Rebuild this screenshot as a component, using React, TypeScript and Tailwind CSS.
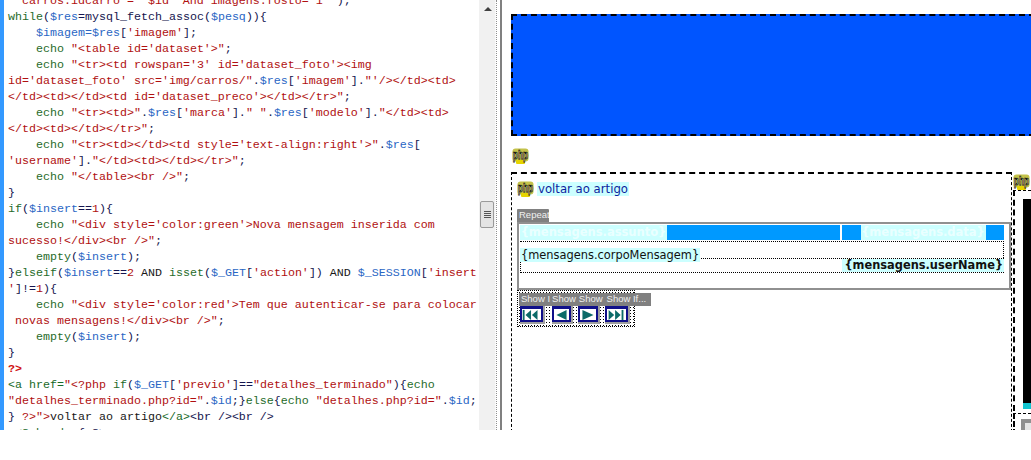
const K = "text-[#1f6b2a]", B = "text-[#2a66c4]", R = "text-[#b01010]", N = "text-[#14144e]", D = "text-[#181818]", G = "text-[#176a28]";
type Seg = [string, string];
const code: { i?: boolean; s: Seg[] }[] = [
  { s: [[R, "  carros.idcarro = '$id' And imagens.fosto='1'\""], [N, ");"]] },
  { s: [[K, "while"], [N, "("], [B, "$res"], [N, "="], [N, "mysql_fetch_assoc"], [N, "("], [B, "$pesq"], [N, ")){"]] },
  { i: true, s: [[B, "$imagem=$res"], [N, "["], [R, "'imagem'"], [N, "];"]] },
  { i: true, s: [[K, "echo "], [R, "\"<table id='dataset'>\""], [N, ";"]] },
  { i: true, s: [[K, "echo "], [R, "\"<tr><td rowspan='3' id='dataset_foto'><img"]] },
  { s: [[R, "id='dataset_foto' src='img/carros/\""], [N, "."], [B, "$res"], [N, "["], [R, "'imagem'"], [N, "]."], [R, "\"'/></td><td>"]] },
  { s: [[R, "</td><td></td><td id='dataset_preco'></td></tr>\""], [N, ";"]] },
  { i: true, s: [[K, "echo "], [R, "\"<tr><td>\""], [N, "."], [B, "$res"], [N, "["], [R, "'marca'"], [N, "]."], [R, "\" \""], [N, "."], [B, "$res"], [N, "["], [R, "'modelo'"], [N, "]."], [R, "\"</td><td>"]] },
  { s: [[R, "</td><td></td></tr>\""], [N, ";"]] },
  { i: true, s: [[K, "echo "], [R, "\"<tr><td></td><td style='text-align:right'>\""], [N, "."], [B, "$res"], [N, "["]] },
  { s: [[R, "'username'"], [N, "]."], [R, "\"</td><td></td></tr>\""], [N, ";"]] },
  { i: true, s: [[K, "echo "], [R, "\"</table><br />\""], [N, ";"]] },
  { s: [[N, "}"]] },
  { s: [[K, "if"], [N, "("], [B, "$insert"], [N, "=="], [R, "1"], [N, "){"]] },
  { i: true, s: [[K, "echo "], [R, "\"<div style='color:green'>Nova mensagem inserida com"]] },
  { s: [[R, "sucesso!</div><br />\""], [N, ";"]] },
  { i: true, s: [[K, "empty"], [N, "("], [B, "$insert"], [N, ");"]] },
  { s: [[N, "}"], [K, "elseif"], [N, "("], [B, "$insert"], [N, "=="], [R, "2"], [D, " AND "], [K, "isset"], [N, "("], [B, "$_GET"], [N, "["], [R, "'action'"], [N, "])"], [D, " AND "], [B, "$_SESSION"], [N, "["], [R, "'insert"]] },
  { s: [[R, "'"], [N, "]!="], [R, "1"], [N, "){"]] },
  { i: true, s: [[K, "echo "], [R, "\"<div style='color:red'>Tem que autenticar-se para colocar"]] },
  { s: [[R, " novas mensagens!</div><br />\""], [N, ";"]] },
  { i: true, s: [[K, "empty"], [N, "("], [B, "$insert"], [N, ");"]] },
  { s: [[N, "}"]] },
  { s: [["text-[#d01010] font-bold", "?>"]] },
  { s: [[G, "<a href="], [R, "\"<?php"], [K, " if"], [N, "("], [B, "$_GET"], [N, "["], [R, "'previo'"], [N, "]=="], [R, "\"detalhes_terminado\""], [N, "){"], [K, "echo"]] },
  { s: [[R, "\"detalhes_terminado.php?id=\""], [N, "."], [B, "$id"], [N, ";}"], [K, "else"], [N, "{"], [K, "echo "], [R, "\"detalhes.php?id=\""], [N, "."], [B, "$id"], [N, ";"]] },
  { s: [[N, "} "], [R, "?>"], [R, "\">"], [D, "voltar ao artigo"], [G, "</a>"], [N, "<br /><br />"]] },
  { s: [[G, " <?php "], [K, "do"], [N, " { ?>"]] },
];

function Php() {
  return (
    <svg width="17" height="16" viewBox="0 0 17 16" className="block shrink-0">
      <rect x="0.5" y="0.5" width="16" height="13" rx="3" fill="#c4c24a" />
      <rect x="4" y="12" width="9" height="4" rx="1" fill="#e6d400" />
      <text x="8.5" y="11" textAnchor="middle" fontFamily="Liberation Sans, sans-serif" fontWeight="700" fontSize="12" fill="#fbf8b8" stroke="#000" strokeWidth="0.75" textLength="15.5" lengthAdjust="spacingAndGlyphs">php</text>
    </svg>
  );
}

function Nav({ kind, w, className = "" }: { kind: "first" | "prev" | "next" | "last"; w: number; className?: string }) {
  const iw = w - 6;
  const paths = {
    first: <><rect x="0" y="1" width="2" height="11" /><path d="M9 1v11L3 6.5zM16 1v11L10 6.5z" /></>,
    prev: <path d="M13 1v11L2 6.5z" />,
    next: <path d="M2 1v11l12-5.5z" />,
    last: <><path d="M1 1v11l6-5.5zM8 1v11l6-5.5z" /><rect x="15" y="1" width="2" height="11" /></>,
  } as const;
  return (
    <div className={"h-[18px] shrink-0 bg-white border-r-2 border-b-2 border-[#a0a0a0] " + className} style={{ width: w }}>
      <div className="h-[16px] border-t-[3px] border-x-2 border-b-2 border-[#10108a] bg-white flex justify-center">
        <svg width={iw} height="12" viewBox={`0 0 ${iw} 13`} className="block" fill="#0b6b68">
          {paths[kind]}
        </svg>
      </div>
    </div>
  );
}

const tag = "bg-[#808080] text-[#f0f0f0] text-[9.5px] leading-[12px] h-[13px] overflow-hidden whitespace-nowrap font-['Liberation_Sans',sans-serif]";
const sans = "font-['DejaVu_Sans',sans-serif]";

export default function App() {
  return (
    <div className="w-[1031px] h-[460px] bg-white overflow-hidden">
      <div className="flex h-[430px] overflow-hidden">
        <div className="w-[4px] shrink-0 bg-[#3399ff]" />
        <div className="w-[475px] shrink-0 pl-[4px] -mt-[7px] font-['Liberation_Mono',monospace] text-[11.67px] leading-[16px] whitespace-pre overflow-hidden">
          {code.map((l, n) => (
            <div key={n} className="h-[16px]">
              {l.i ? "    " : ""}
              {l.s.map(([c, t], j) => <span key={j} className={c}>{t}</span>)}
            </div>
          ))}
        </div>
        <div className="w-[17px] shrink-0 bg-[#f1f1f1] pl-[1px] border-r border-[#fafafa]">
          <div className="ml-[4px] mt-[7px] w-0 h-0 border-x-[4px] border-x-transparent border-b-[4px] border-b-[#404040]" />
          <div className="mt-[190px] w-[14px] h-[27px] bg-[#e4e4e4] border border-[#9a9a9a] rounded-[2px] flex flex-col items-center justify-center gap-[1px]">
            <div className="w-[7px] h-[1px] bg-[#555]" />
            <div className="w-[7px] h-[1px] bg-[#555]" />
            <div className="w-[7px] h-[1px] bg-[#555]" />
            <div className="w-[7px] h-[1px] bg-[#555]" />
          </div>
        </div>
        <div className="w-[4px] shrink-0 bg-white border-l border-dotted border-[#909090]" />
        <div className="w-[2px] shrink-0 bg-[#808080]" />

        <div className={"flex-1 min-w-0 pl-[9px] pt-[14px] overflow-hidden " + sans}>
          <div className="h-[122px] -mr-[4px] bg-[#0055ff] border-2 border-dashed border-black" />
          <div className="h-[36px] pt-[12px] pl-[1px]"><Php /></div>
          <div className="flex">
            <div className="w-[501px] shrink-0 h-[260px] border-t-2 border-x border-dashed border-black pl-[5px] pt-[7px]">
              <div className="flex items-center h-[15px]">
                <Php />
                <span className="ml-[3px] bg-[#ccffff] px-[1px] text-[11.7px] leading-[14px] text-[#0d1f9e]">voltar ao artigo</span>
              </div>
              <div className="mt-[13px] flex flex-col">
                <div className={tag + " w-[32px] pl-[2px] rounded-t-[1px]"}>Repeat</div>
                <div className="w-[494px] h-[68px] border-2 border-[#909090] pl-[1px] pt-[1px] pr-[5px]">
                  <div className="flex gap-[2px] h-[15px]">
                    <div className="flex-1 bg-[#0099ff] flex">
                      <div className="w-[147px] h-full bg-[#ccffff] text-[#eaffff] text-[11.5px] leading-[14px] font-bold text-center whitespace-nowrap overflow-hidden">{"{mensagens.assunto}"}</div>
                    </div>
                    <div className="w-[162px] bg-[#0099ff] flex justify-center">
                      <div className="w-[125px] h-full bg-[#ccffff] text-[#eaffff] text-[11.5px] leading-[14px] font-bold text-center whitespace-nowrap overflow-hidden">{"{mensagens.data}"}</div>
                    </div>
                  </div>
                  <div className="h-[17px] mt-[1px] border-t border-r border-dotted border-black">
                    <span className="bg-[#ccffff] inline-block px-[1px] text-[11.4px] leading-[14px] text-[#111]">{"{mensagens.corpoMensagem}"}</span>
                  </div>
                  <div className="flex h-[15px] border-y border-l border-dotted border-black">
                    <div className="flex-1" />
                    <div className="w-[162px] bg-[#ccffff] text-right pr-[1px] text-[11.4px] leading-[13px] font-bold text-[#111] whitespace-nowrap overflow-hidden">{"{mensagens.userName}"}</div>
                  </div>
                </div>
              </div>
              <div className="w-[118px] h-[37px] border border-dotted border-black pt-[2px] bg-[radial-gradient(#000_0.6px,transparent_0.7px)] bg-[length:3px_3px]">
                <div className={tag + " ml-[1px] w-[132px] flex pl-[2px]"}>
                  <span>Show I</span><span className="ml-[2px]">Show</span><span className="ml-[3px]">Show</span><span className="ml-[4px]">Show If...</span>
                </div>
                <div className="flex pl-[2px]">
                  <Nav kind="first" w={25} />
                  <Nav kind="prev" w={21} className="ml-[7px]" />
                  <Nav kind="next" w={22} className="ml-[5px]" />
                  <Nav kind="last" w={25} className="ml-[5px]" />
                </div>
              </div>
            </div>
            <div className="flex-1 min-w-0 -mt-[1px] pt-[3px] pl-[1px]">
              <Php />
              <div className="h-[221px] border-l-2 border-t border-dashed border-black pl-[8px] pt-[8px]">
                <div className="w-[12px] h-[204px] bg-black" />
                <div className="w-[12px] h-[6px] bg-[#11c5d0]" />
              </div>
              <div className="mt-[2px] h-[30px] border-l-2 border-t border-dashed border-black pl-[6px] pt-[5px]">
                <div className="w-[14px] h-[14px] bg-[#e6e6e6] border-t-4 border-l-4 border-[#909090]" />
              </div>
            </div>
          </div>
        </div>
      </div>
    </div>
  );
}
